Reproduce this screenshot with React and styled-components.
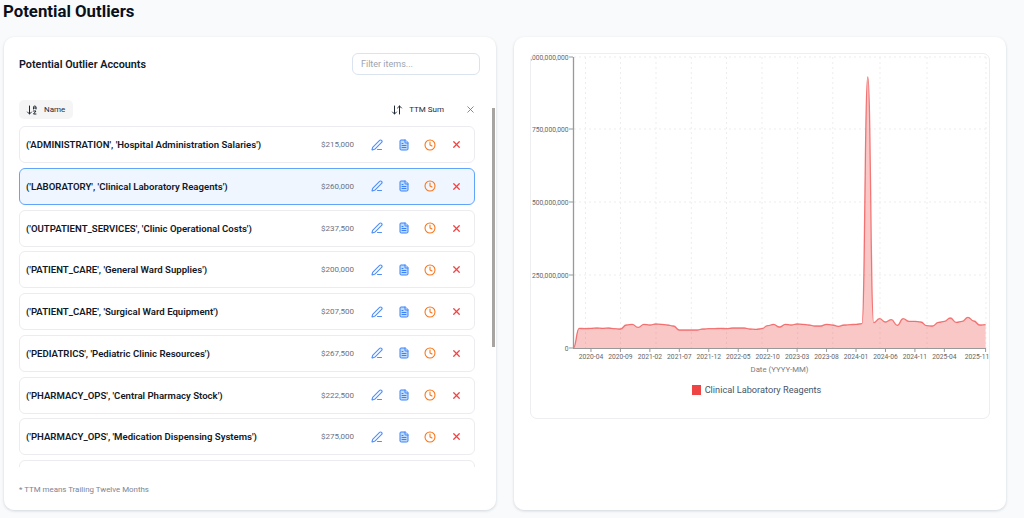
import React from 'react';
import styled, { createGlobalStyle } from 'styled-components';
import { ArrowDownAZ, ArrowDownUp, Clock, FileText, PenLine, X } from 'lucide-react';

const GlobalStyle = createGlobalStyle`
  html, body { margin: 0; padding: 0; background: #f8fafc; }
  body { font-family: Roboto, "Open Sans", sans-serif; color: #0f172a; }
`;

const Page = styled.div`
  width: 1024px;
  height: 518px;
  overflow: hidden;
  padding: 0 18px 8px 4px;
  box-sizing: border-box;
`;

const PageTitle = styled.h1`
  margin: 0 0 0 -1px;
  height: 37px;
  font-size: 16.8px;
  line-height: 22px;
  font-weight: 700;
  color: #0b0f19;
`;

const Columns = styled.div`
  display: grid;
  grid-template-columns: 492px 492px;
  gap: 18px;
  height: 473px;
`;

const Card = styled.section`
  position: relative;
  background: #fff;
  border-radius: 10px;
  box-shadow: 0 1px 3px rgba(15, 23, 42, 0.16);
  box-sizing: border-box;
  display: flex;
  flex-direction: column;
`;

const ListCard = styled(Card)`
  padding: 16px 16px 16px 15px;
`;

const ChartCard = styled(Card)`
  padding: 16px;
`;

const TopRow = styled.div`
  display: flex;
  align-items: center;
  justify-content: space-between;
  height: 22px;
  margin-bottom: 25px;
`;

const CardTitle = styled.h2`
  margin: 0;
  font-size: 10.8px;
  font-weight: 600;
  color: #111827;
`;

const FilterInput = styled.input`
  width: 128px;
  height: 22px;
  box-sizing: border-box;
  border: 1px solid #dbe3ef;
  border-radius: 6px;
  padding: 0 8px;
  font: 400 9px Roboto, sans-serif;
  background: #fff;
  &::placeholder { color: #9ca3af; }
`;

const SortRow = styled.div`
  display: flex;
  align-items: center;
  width: 456px;
  height: 19px;
  margin-bottom: 7px;
`;

const SortButton = styled.div`
  display: flex;
  align-items: center;
  gap: 6px;
  height: 19px;
  padding: 0 8px 0 7px;
  border-radius: 5px;
  font-size: 8px;
  font-weight: 400;
  color: #1f2937;
  background: ${({ $chip }) => ($chip ? '#f5f5f5' : 'transparent')};
  margin-left: ${({ $push }) => ($push ? 'auto' : '0')};
`;

const ClearButton = styled.div`
  display: flex;
  color: #64748b;
  margin-left: 13px;
  margin-right: -1px;
`;

const List = styled.div`
  display: flex;
  flex-direction: column;
  gap: 4.75px;
  width: 456px;
  height: 341px;
  overflow: hidden;
`;

const Row = styled.div`
  flex: 0 0 37px;
  display: flex;
  align-items: center;
  box-sizing: border-box;
  padding: 0 4px 0 6px;
  border: 1px solid ${({ $selected }) => ($selected ? '#60a5fa' : '#ececf0')};
  border-radius: 6px;
  background: ${({ $selected }) => ($selected ? '#eff6ff' : '#fff')};
`;

const RowName = styled.span`
  flex: 1;
  font-size: 9.6px;
  font-weight: 600;
  color: #111827;
  white-space: nowrap;
`;

const RowAmount = styled.span`
  margin-right: 10px;
  font-size: 8px;
  color: #6b7280;
`;

const IconButton = styled.span`
  flex: 0 0 26.5px;
  display: flex;
  justify-content: center;
  color: ${({ $color }) => $color};
`;

const FootNote = styled.p`
  margin: auto 0 0;
  font-size: 7.9px;
  color: #7b8494;
`;

const ScrollThumb = styled.div`
  position: absolute;
  left: 488px;
  top: 71px;
  width: 2.5px;
  height: 239px;
  background: #a8a4a2;
`;

const ChartBox = styled.div`
  height: 366px;
  box-sizing: border-box;
  border: 1px solid #eceef2;
  border-radius: 7px;
  overflow: hidden;
`;

const ChartSvg = styled.svg`
  display: block;
`;

const Legend = styled.div`
  display: flex;
  justify-content: center;
  align-items: center;
  gap: 4px;
  margin-top: 5px;
  padding-right: 7px;
  font-size: 9.2px;
  color: #475569;
`;

const LegendSwatch = styled.span`
  width: 9px;
  height: 10px;
  background: #ef4444;
`;

const rows = [
  ["('ADMINISTRATION', 'Hospital Administration Salaries')", '$215,000'],
  ["('LABORATORY', 'Clinical Laboratory Reagents')", '$260,000', true],
  ["('OUTPATIENT_SERVICES', 'Clinic Operational Costs')", '$237,500'],
  ["('PATIENT_CARE', 'General Ward Supplies')", '$200,000'],
  ["('PATIENT_CARE', 'Surgical Ward Equipment')", '$207,500'],
  ["('PEDIATRICS', 'Pediatric Clinic Resources')", '$267,500'],
  ["('PHARMACY_OPS', 'Central Pharmacy Stock')", '$222,500'],
  ["('PHARMACY_OPS', 'Medication Dispensing Systems')", '$275,000'],
];

// chart y values are read off the picture, in px*3 from y=290
const series = [
  174, 115, 116, 115, 114, 115, 114, 116, 117, 105, 103, 112, 103, 105, 102, 103, 105, 108,
  120, 120, 120, 120, 117, 116, 116, 115, 116, 114, 114, 114, 117, 118, 116, 107, 103, 111,
  103, 105, 102, 103, 105, 108, 108, 103, 105, 109, 105, 104, 103, 101, -639, 98, 86, 96,
  89, 106, 86, 94, 94, 96, 107, 108, 97, 94, 84, 97, 94, 82, 93, 105, 104,
];

const monthX = (i) => 573.3 + 5.89 * i;
const toY = (v) => 290 + v / 3;

// smooth curve with flat tangents at each month
const linePath = series.reduce((d, v, i) => {
  const x = monthX(i);
  if (i === 0) return `M${x},${toY(v)}`;
  const mid = x - 5.89 / 2;
  return `${d}C${mid},${toY(series[i - 1])} ${mid},${toY(v)} ${x},${toY(v)}`;
}, '');
const areaPath = `${linePath}L${monthX(70)},348L${monthX(0)},348Z`;

const xTicks = [
  [3, '2020-04'], [8, '2020-09'], [13, '2021-02'], [18, '2021-07'], [23, '2021-12'],
  [28, '2022-05'], [33, '2022-10'], [38, '2023-03'], [43, '2023-08'], [48, '2024-01'],
  [53, '2024-06'], [58, '2024-11'], [63, '2025-04'], [70, '2025-11'],
];
const yTicks = [[348, '0'], [275, '250,000,000'], [202, '500,000,000'], [129, '750,000,000'], [57, '1,000,000,000']];
const gridX = [585.5, 620.5, 656, 691.3, 726.5, 762, 797.7, 832.8, 880, 927, 986];

const Chart = () => (
  <ChartSvg width="458" height="325" viewBox="531 54 458 325">
    <g stroke="#ededed" strokeDasharray="2 3" strokeWidth="1">
      {yTicks.slice(1).map(([y]) => <line key={y} x1="574" x2="986" y1={y} y2={y} />)}
      {gridX.map((x) => <line key={x} x1={x} x2={x} y1="57" y2="348" />)}
    </g>
    <path d={areaPath} fill="#ef4444" fillOpacity="0.3" />
    <path d={linePath} fill="none" stroke="#ef4444" strokeOpacity="0.7" strokeWidth="1.3" />
    <g stroke="#999" strokeWidth="1">
      <line x1="573.5" x2="573.5" y1="57" y2="348" strokeWidth="1.3" />
      <line x1="573" x2="986" y1="348.5" y2="348.5" />
      {yTicks.map(([y]) => <line key={y} x1="569" x2="573" y1={y} y2={y} />)}
      {xTicks.map(([i]) => <line key={i} x1={monthX(i)} x2={monthX(i)} y1="348" y2="352" />)}
    </g>
    <g fontFamily="Roboto, sans-serif" fontSize="6.7" fill="#666">
      {yTicks.map(([y, label]) => <text key={y} x="568.5" y={y + 2.5} textAnchor="end">{label}</text>)}
      {xTicks.map(([i, label]) => (
        <text key={i} x={i === 70 ? 977 : monthX(i)} y="359" textAnchor="middle">{label}</text>
      ))}
      <text x="779.5" y="372" textAnchor="middle" fontSize="7.8" fill="#7c7c7c">Date (YYYY-MM)</text>
    </g>
  </ChartSvg>
);

export default function App() {
  return (
    <>
      <GlobalStyle />
      <Page>
        <PageTitle>Potential Outliers</PageTitle>
        <Columns>
          <ListCard>
            <TopRow>
              <CardTitle>Potential Outlier Accounts</CardTitle>
              <FilterInput placeholder="Filter items..." readOnly />
            </TopRow>
            <SortRow>
              <SortButton $chip>
                <ArrowDownAZ size={12} strokeWidth={2} />
                Name
              </SortButton>
              <SortButton $push>
                <ArrowDownUp size={12} strokeWidth={2} />
                TTM Sum
              </SortButton>
              <ClearButton><X size={11} strokeWidth={1.8} /></ClearButton>
            </SortRow>
            <List>
              {rows.map(([name, amount, selected]) => (
                <Row key={name} $selected={selected}>
                  <RowName>{name}</RowName>
                  <RowAmount>{amount}</RowAmount>
                  <IconButton $color="#4f8ff7"><PenLine size={12} strokeWidth={2.2} /></IconButton>
                  <IconButton $color="#3b82f6"><FileText size={12} strokeWidth={2} fill="#bfdbfe" /></IconButton>
                  <IconButton $color="#f97316"><Clock size={12} strokeWidth={2.1} /></IconButton>
                  <IconButton $color="#ef4444"><X size={11} strokeWidth={2.8} /></IconButton>
                </Row>
              ))}
              <Row />
            </List>
            <FootNote>* TTM means Trailing Twelve Months</FootNote>
            <ScrollThumb />
          </ListCard>
          <ChartCard>
            <ChartBox>
              <Chart />
              <Legend>
                <LegendSwatch />
                Clinical Laboratory Reagents
              </Legend>
            </ChartBox>
          </ChartCard>
        </Columns>
      </Page>
    </>
  );
}
